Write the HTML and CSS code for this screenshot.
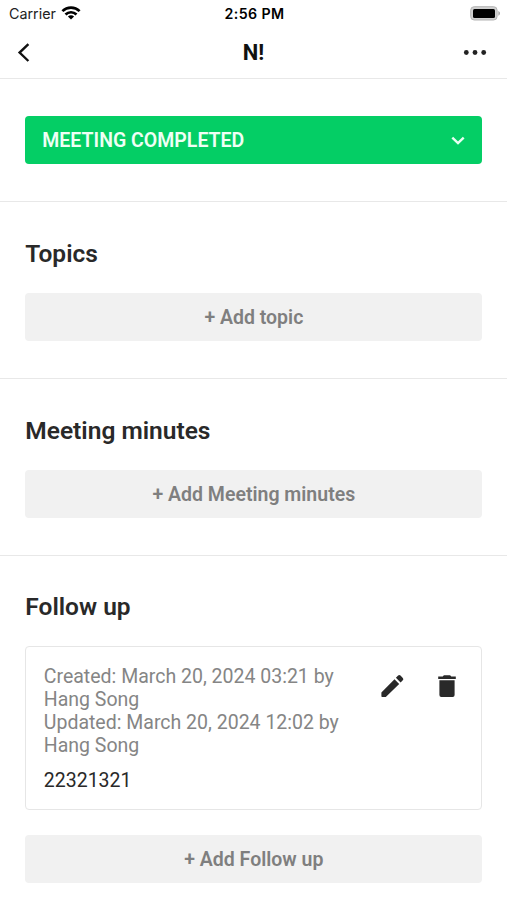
FILE: index.html
```html
<!DOCTYPE html>
<html lang="en">
<head>
<meta charset="utf-8">
<meta name="viewport" content="width=device-width, initial-scale=1">
<title>N!</title>
<link rel="stylesheet" href="styles.css">
</head>
<body>
<div class="status-bar">
  <div class="carrier"><span>Carrier</span>
    <svg class="wifi" width="20" height="14" viewBox="0 0 20 14" fill="none" stroke="#000" stroke-width="2.700"><path d="M1.400 5.100C6.200.5 13.800.5 18.600 5.100M4.500 8.500c3.100-3 7.900-3 11 0"/><path d="M10 13.500 6.900 10.400c1.700-1.500 4.500-1.500 6.200 0z" fill="#000" stroke="none"/></svg>
  </div>
  <span class="time">2:56 PM</span>
  <svg class="battery" width="31" height="16" viewBox="0 0 31 16"><rect x=".7" y=".7" width="26.400" height="13.300" rx="3.500" fill="#d0d0d0" stroke="#b4b4b4"/><rect x="3" y="3" width="22" height="9" rx="1.500" fill="#000"/><path d="M28.300 5.100c2.300.8 2.300 3.800 0 4.600z" fill="#aaa"/></svg>
</div>
<header class="nav">
  <svg class="back" width="14" height="20" viewBox="0 0 14 20" fill="none" stroke="#111" stroke-width="2.400"><path d="M11.400 1.200 2.600 9.600l8.800 8.400"/></svg>
  <h1 class="nav-title">N!</h1>
  <svg class="more" width="24" height="6" viewBox="0 0 24 6" fill="#222"><circle cx="3.300" cy="2.500" r="2.400"/><circle cx="12" cy="2.500" r="2.400"/><circle cx="20.700" cy="2.500" r="2.400"/></svg>
</header>
<main>
  <section class="section section-status">
    <button class="status-button"><span>MEETING COMPLETED</span>
      <svg width="14" height="10" viewBox="0 0 14 10" fill="none" stroke="#e9fff2" stroke-width="2.400"><path d="m1.300 2.700 5.700 5.500 5.700-5.500"/></svg>
    </button>
  </section>
  <section class="section">
    <h2 class="heading">Topics</h2>
    <button class="add-button">+ Add topic</button>
  </section>
  <section class="section">
    <h2 class="heading">Meeting minutes</h2>
    <button class="add-button">+ Add Meeting minutes</button>
  </section>
  <section class="section section-last">
    <h2 class="heading">Follow up</h2>
    <article class="card">
      <div class="card-text">
        <p class="meta">Created: March 20, 2024 03:21 by<br>Hang Song</p>
        <p class="meta">Updated: March 20, 2024 12:02 by<br>Hang Song</p>
        <p class="note">22321321</p>
      </div>
      <div class="actions">
        <svg width="24" height="24" viewBox="0 0 24 24" fill="#292929"><path d="M1.400 18.600v3.700q0 .7.700.7h3.700L19.200 9.900 14.500 5.200zM15.900 3.800l4.700 4.700 2.200-2.200a1.700 1.700 0 0 0 0-2.400l-2.300-2.300a1.700 1.700 0 0 0-2.400 0z"/></svg>
        <svg width="20" height="24" viewBox="0 0 20 24" fill="#292929"><path d="M1.200 2.500h4.500l1.200-1.200h6.200l1.200 1.200h4.500v2.400H1.200zM2.400 6.300h15.200v14.800a1.900 1.900 0 0 1-1.900 1.900H4.300a1.900 1.900 0 0 1-1.900-1.900z"/></svg>
      </div>
    </article>
    <button class="add-button">+ Add Follow up</button>
  </section>
</main>
</body>
</html>
```
FILE: styles.css
```css
* { box-sizing: border-box; }
body { margin: 0; height: 900px; overflow: hidden; background: #fff; color: #292929; font-family: Roboto, sans-serif; }
h1, h2, p { margin: 0; }
button { border: 0; font: inherit; }
svg { display: block; flex: none; }

.status-bar { height: 27px; display: grid; grid-template-columns: 1fr auto 1fr; align-items: center; padding: 0 7px 0 9px; font-family: Inter, sans-serif; color: #000; }
.carrier { display: flex; align-items: center; gap: 5px; font-size: 14.3px; color: #222; }
.wifi { margin-bottom: 2px; }
.time { font-size: 14.2px; font-weight: 600; letter-spacing: .4px; }
.battery { justify-self: end; margin-right: -1px; }

.nav { height: 52px; display: grid; grid-template-columns: 1fr auto 1fr; align-items: center; padding: 0 19px 0 17px; border-bottom: 1px solid #e8e8e8; }
.nav-title { margin-left: 2px; font-size: 22px; line-height: 26px; font-weight: 700; color: #111; }
.more { justify-self: end; margin-right: 1px; }

.section { height: 177px; padding: 37px 24.6px 0 25.3px; border-bottom: 1px solid #e8e8e8; }
.section-status { height: 123px; }
.section-last { height: auto; padding-top: 36px; border: 0; }
.heading { margin-bottom: 24px; font-size: 24.5px; line-height: 30px; font-weight: 600; }
.status-button, .add-button { width: 100%; height: 48px; border-radius: 4px; font-size: 19.5px; font-weight: 600; }
.status-button { display: flex; align-items: center; justify-content: space-between; padding: 0 17.5px 0 17px; background: #04ce65; color: #effff5; }
.add-button { display: block; padding: 0; background: #f1f1f1; color: #7f7f7f; }

.card { display: flex; justify-content: space-between; height: 164px; margin-bottom: 25px; padding: 18px 24.7px 0 17.5px; border: 1px solid #e6e6e6; border-radius: 4px; }
.meta, .note { font-size: 19.5px; line-height: 23px; color: #858585; white-space: nowrap; }
.note { margin-top: 12px; color: #292929; }
.actions { display: flex; gap: 33px; padding-top: 9px; }
```
